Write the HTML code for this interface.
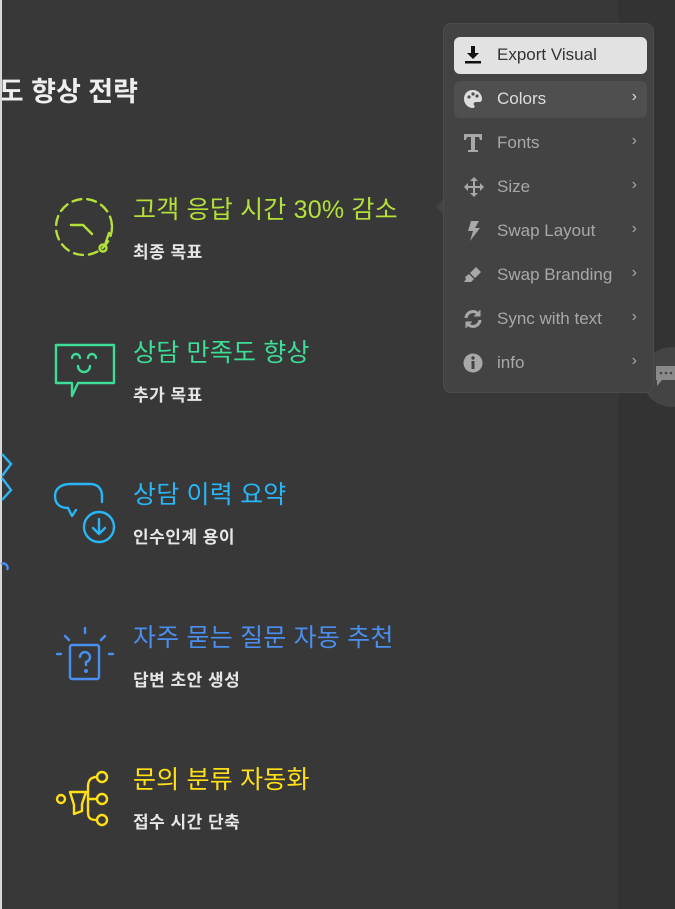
<!DOCTYPE html>
<html><head><meta charset="utf-8"><style>
html,body{margin:0;width:675px;height:909px;overflow:hidden}
body{background:#383838;font-family:"Liberation Sans","Noto Sans CJK KR",sans-serif;position:relative}
.edge{position:absolute;left:0;top:0;width:2px;height:909px;background:#d8d8d8}
.rp{position:absolute;left:618px;top:0;width:57px;height:909px;background:#333}
.tw{position:absolute;left:2px;top:60px;width:200px;height:50px;overflow:hidden}
.title{position:absolute;right:64px;top:10px;white-space:nowrap;color:#eee;font-weight:bold;font-size:27px}
.h{position:absolute;left:133px;font-size:25px;white-space:nowrap;letter-spacing:0.2px}
.s{position:absolute;left:133px;font-size:17px;font-weight:bold;color:#e6e6e6;white-space:nowrap;letter-spacing:0.5px}
svg.ic{position:absolute;left:52px}
.menu{position:absolute;left:443px;top:23px;width:211px;height:370px;background:#434343;border-radius:8px;border:1px solid #4c4c4c;box-sizing:border-box}
.mi{position:absolute;left:10px;width:193px;height:37px;border-radius:6px;color:#a8a8a8;font-size:17px}
.mi span{position:absolute;left:43px;top:8px}
.mi b{position:absolute;right:10px;top:7px;font-weight:normal;font-size:16px}
.mi svg{position:absolute;left:9px;top:8px}
</style></head><body>
<div class="edge"></div><div class="rp"></div>
<div class="tw"><div class="title">만족도 향상 전략</div></div>

<div class="h" style="top:190px;color:#b4e03a">고객 응답 시간 30% 감소</div>
<div class="s" style="top:238px">최종 목표</div>
<svg class="ic" style="top:196px" width="64" height="64" viewBox="0 0 64 64" fill="none" stroke="#b4e03a" stroke-width="2.4" stroke-linecap="round"><circle cx="32" cy="31" r="28" stroke-dasharray="9 6"/><path d="M19 29h12l9 9"/><circle cx="51" cy="52" r="3.5"/><path d="M53 49l4-12"/></svg>

<div class="h" style="top:333px;color:#3ddc97">상담 만족도 향상</div>
<div class="s" style="top:381px">추가 목표</div>
<svg class="ic" style="top:340px" width="64" height="64" viewBox="0 0 64 64" fill="none" stroke="#3ddc97" stroke-width="2.4" stroke-linejoin="round" stroke-linecap="round"><path d="M4 5h58v38H26L20 56V43H4z"/><path d="M20 18a4 4 0 0 1 8 0M36 18a4 4 0 0 1 8 0M26 26a6 6 0 0 0 12 0"/></svg>

<div class="h" style="top:475px;color:#29b6f6">상담 이력 요약</div>
<div class="s" style="top:523px">인수인계 용이</div>
<svg class="ic" style="top:482px" width="66" height="64" viewBox="0 0 66 64" fill="none" stroke="#29b6f6" stroke-width="2.4" stroke-linecap="round" stroke-linejoin="round"><path d="M24 28 L20 34 16 26C8 26 3 22 3 14 3 6 10 2 18 2h20c8 0 12 5 12 12v6"/><circle cx="47" cy="45" r="15"/><path d="M47 37v15M41 46l6 6 6-6"/></svg>

<div class="h" style="top:618px;color:#4a8ff0">자주 묻는 질문 자동 추천</div>
<div class="s" style="top:666px">답변 초안 생성</div>
<svg class="ic" style="top:624px" width="66" height="64" viewBox="0 0 66 64" fill="none" stroke="#4a8ff0" stroke-width="2.4" stroke-linecap="round"><path d="M33 4v5M13 12l4 4M53 12l-4 4M5 30h4M57 30h4"/><rect x="18" y="21" width="29" height="34" rx="2"/><path d="M28 33a5 5 0 1 1 6 5v3"/><circle cx="34" cy="47" r=".8" fill="#4a8ff0"/></svg>

<div class="h" style="top:760px;color:#ffe016">문의 분류 자동화</div>
<div class="s" style="top:808px">접수 시간 단축</div>
<svg class="ic" style="top:768px" width="66" height="64" viewBox="0 0 66 64" fill="none" stroke="#ffe016" stroke-width="2.4" stroke-linecap="round" stroke-linejoin="round"><circle cx="9" cy="31" r="4"/><path d="M18 24h16l-4 12v7l-8 3v-9z"/><circle cx="50" cy="9" r="5"/><circle cx="50" cy="31" r="5"/><circle cx="50" cy="52" r="5"/><path d="M45 9c-7 0-9 4-9 10v25c0 6 2 8 9 8M36 31h9"/></svg>

<svg style="position:absolute;left:0;top:452px" width="14" height="50" fill="none" stroke="#29b6f6" stroke-width="2.4"><path d="M2 2l9 10-9 12M2 48l9-10-9-12"/></svg>
<svg style="position:absolute;left:0;top:560px" width="12" height="30" fill="none" stroke="#4a8ff0" stroke-width="2.4"><path d="M1 4c5-2 8 3 6 6"/></svg>

<svg style="position:absolute;left:436px;top:198px" width="8" height="18"><path d="M8 0L0 9l8 9z" fill="#434343"/></svg>
<div style="position:absolute;left:642px;top:347px;width:60px;height:60px;border-radius:50%;background:#444"></div>
<svg style="position:absolute;left:656px;top:366px" width="19" height="22"><path d="M0 0h19v14H6l-5 6V14H0z" fill="#8a8a8a"/><circle cx="5" cy="7" r="1.3" fill="#444"/><circle cx="10" cy="7" r="1.3" fill="#444"/><circle cx="15" cy="7" r="1.3" fill="#444"/></svg>

<div class="menu">
<div class="mi" style="top:13px;background:#e2e2e2;color:#333"><svg width="20" height="20" viewBox="0 0 20 20"><path d="M8 1h4v7h4l-6 6-6-6h4z" fill="#111"/><rect x="2" y="16" width="16" height="2.5" fill="#111"/></svg><span>Export Visual</span></div>
<div class="mi" style="top:57px;background:#4f4f4f;color:#ddd"><svg width="20" height="20" viewBox="0 0 20 20"><path d="M10 1C4 1 1 5 1 10s4 9 9 9c2 0 2-2 1-3s0-3 2-3h3c2 0 3-1 3-3 0-5-4-9-9-9z" fill="#ddd"/><circle cx="6" cy="8" r="1.6" fill="#4f4f4f"/><circle cx="10" cy="5" r="1.6" fill="#4f4f4f"/><circle cx="14" cy="7" r="1.6" fill="#4f4f4f"/></svg><span>Colors</span><b>›</b></div>
<div class="mi" style="top:101px"><svg width="20" height="20" viewBox="0 0 20 20"><path d="M1 1h18v6h-2l-1-3h-4v13h3v2H5v-2h3V4H4L3 7H1z" fill="#a8a8a8"/></svg><span>Fonts</span><b>›</b></div>
<div class="mi" style="top:145px"><svg width="22" height="20" viewBox="0 0 22 20"><path d="M11 0l4 4h-3v5h5V6l4 4-4 4v-3h-5v5h3l-4 4-4-4h3v-5H5v3l-4-4 4-4v3h5V4H7z" fill="#a8a8a8"/></svg><span>Size</span><b>›</b></div>
<div class="mi" style="top:189px"><svg width="20" height="20" viewBox="0 0 20 20"><path d="M8 0h8l-4 7h5L7 20l3-10H5z" fill="#a8a8a8"/></svg><span>Swap Layout</span><b>›</b></div>
<div class="mi" style="top:233px"><svg width="20" height="20" viewBox="0 0 20 20"><path d="M13 2l5 5-6 6-5-5zM6 9l5 5-3 3H1l2-3-1-2z" fill="#a8a8a8"/></svg><span>Swap Branding</span><b>›</b></div>
<div class="mi" style="top:277px"><svg width="20" height="20" viewBox="0 0 20 20" fill="none" stroke="#a8a8a8" stroke-width="3"><path d="M3 9a7 7 0 0 1 13-3M17 11a7 7 0 0 1-13 3"/><path d="M17 1v6h-6M3 19v-6h6" fill="#a8a8a8" stroke-width="1"/></svg><span>Sync with text</span><b>›</b></div>
<div class="mi" style="top:321px"><svg width="20" height="20" viewBox="0 0 20 20"><circle cx="10" cy="10" r="9.5" fill="#a8a8a8"/><rect x="8.5" y="8" width="3" height="8" fill="#434343"/><circle cx="10" cy="5" r="1.7" fill="#434343"/></svg><span>info</span><b>›</b></div>
</div>
</body></html>
